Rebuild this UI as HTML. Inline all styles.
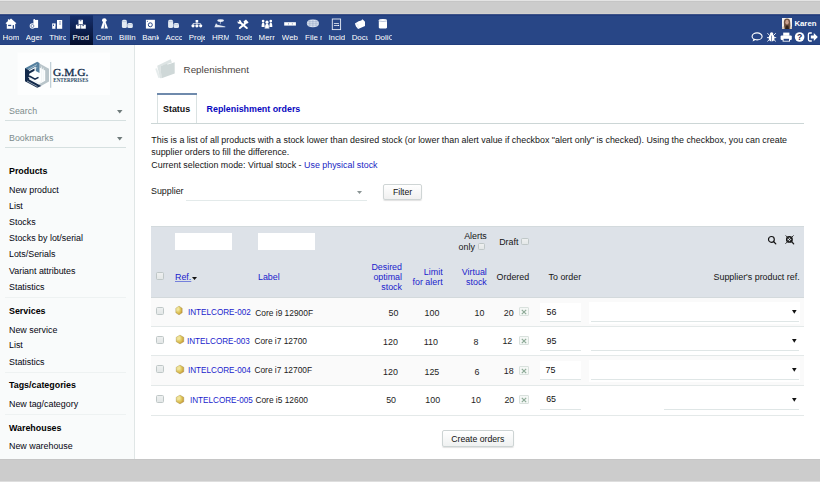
<!DOCTYPE html>
<html><head><meta charset="utf-8"><title>Replenishment</title>
<style>
html,body{margin:0;padding:0;}
body{width:820px;height:482px;overflow:hidden;position:relative;background:#fff;font-family:"Liberation Sans", sans-serif;}
.t{position:absolute;white-space:nowrap;line-height:1;font-family:"Liberation Sans", sans-serif;}
svg{overflow:visible;}
</style></head><body>
<div style="position:absolute;left:0px;top:0px;width:820px;height:14px;background:#cccccc;"></div>
<div style="position:absolute;left:0px;top:0px;width:820px;height:1px;background:#e4e4e4;"></div>
<div style="position:absolute;left:0px;top:1px;width:820px;height:1px;background:#c6c6c6;"></div>
<div style="position:absolute;left:0px;top:13px;width:820px;height:1px;background:#d3d1ce;"></div>
<div style="position:absolute;left:0px;top:14px;width:820px;height:31px;background:#284686;"></div>
<div style="position:absolute;left:0px;top:14px;width:820px;height:1px;background:#3d5287;"></div>
<div style="position:absolute;left:0px;top:15px;width:820px;height:1px;background:#213c7d;"></div>
<div style="position:absolute;left:0px;top:44px;width:820px;height:1px;background:#223e7e;"></div>
<div style="position:absolute;left:69.8px;top:14.5px;width:23.2px;height:30.5px;background:linear-gradient(#16306e,#040e2c);"></div>
<div class="t" style="left:2.60px;top:34px;font-size:7.9px;color:#fff;width:16.60px;overflow:hidden;">Hom</div>
<div class="t" style="left:25.87px;top:34px;font-size:7.9px;color:#fff;width:16.60px;overflow:hidden;">Ager</div>
<div class="t" style="left:49.14px;top:34px;font-size:7.9px;color:#fff;width:16.60px;overflow:hidden;">Thirc</div>
<div class="t" style="left:72.41px;top:34px;font-size:7.9px;color:#fff;width:16.60px;overflow:hidden;">Prod</div>
<div class="t" style="left:95.68px;top:34px;font-size:7.9px;color:#fff;width:16.60px;overflow:hidden;">Com</div>
<div class="t" style="left:118.95px;top:34px;font-size:7.9px;color:#fff;width:16.60px;overflow:hidden;">Billin</div>
<div class="t" style="left:142.22px;top:34px;font-size:7.9px;color:#fff;width:16.60px;overflow:hidden;">Bank</div>
<div class="t" style="left:165.49px;top:34px;font-size:7.9px;color:#fff;width:16.60px;overflow:hidden;">Accc</div>
<div class="t" style="left:188.76px;top:34px;font-size:7.9px;color:#fff;width:16.60px;overflow:hidden;">Proje</div>
<div class="t" style="left:212.03px;top:34px;font-size:7.9px;color:#fff;width:16.60px;overflow:hidden;">HRM</div>
<div class="t" style="left:235.30px;top:34px;font-size:7.9px;color:#fff;width:16.60px;overflow:hidden;">Tools</div>
<div class="t" style="left:258.57px;top:34px;font-size:7.9px;color:#fff;width:16.60px;overflow:hidden;">Merr</div>
<div class="t" style="left:281.84px;top:34px;font-size:7.9px;color:#fff;width:16.60px;overflow:hidden;">Web</div>
<div class="t" style="left:305.11px;top:34px;font-size:7.9px;color:#fff;width:16.60px;overflow:hidden;">File manager</div>
<div class="t" style="left:328.38px;top:34px;font-size:7.9px;color:#fff;width:16.60px;overflow:hidden;">Incid</div>
<div class="t" style="left:351.65px;top:34px;font-size:7.9px;color:#fff;width:16.60px;overflow:hidden;">Docu</div>
<div class="t" style="left:374.92px;top:34px;font-size:7.9px;color:#fff;width:16.60px;overflow:hidden;">DoliC</div>
<svg style="position:absolute;left:0;top:0" width="400" height="45" viewBox="0 0 400 45"><path d="M11.0 18.6 L16.4 23.3 L15.4 23.9 L15.2 23.7 L15.2 28.8 L6.8 28.8 L6.8 23.7 L6.6 23.9 L5.5 23.3Z" fill="#fff"/><rect x="7.9" y="19.3" width="1.4" height="2.6" fill="#fff"/><rect x="8.1" y="24.8" width="3.1" height="1.3" fill="#284686"/><rect x="12.7" y="25.1" width="1.3" height="3.7" fill="#284686"/><rect x="33.4" y="19.9" width="4.7" height="8" fill="#fff"/><rect x="33.6" y="19.0" width="1.3" height="1.5" fill="#fff"/><circle cx="32.4" cy="26.0" r="2.7" fill="#fff"/><circle cx="32.4" cy="26.0" r="1.5" fill="none" stroke="#284686" stroke-width="0.6"/><rect x="52.2" y="23.4" width="3.4" height="5.4" fill="#fff"/><rect x="57.0" y="20.0" width="5.2" height="8.8" fill="#fff"/><rect x="53.0" y="24.6" width="1.0" height="1.3" fill="#284686"/><rect x="59.5" y="21.3" width="1.0" height="1.2" fill="#284686"/><rect x="59.5" y="23.4" width="1.0" height="1.2" fill="#284686"/><rect x="55.6" y="26.5" width="1.4" height="2.3" fill="#284686"/><rect x="78.5" y="19.8" width="4.4" height="4.4" fill="#fff"/><rect x="75.9" y="24.7" width="4.6" height="4.0" fill="#fff"/><rect x="81.1" y="24.7" width="4.7" height="4.0" fill="#fff"/><rect x="79.8" y="20.4" width="1.6" height="0.8" fill="#1b3270"/><rect x="77.2" y="25.3" width="1.6" height="0.8" fill="#102560"/><rect x="82.4" y="25.3" width="1.6" height="0.8" fill="#102560"/><ellipse cx="104.3" cy="20.2" rx="2.3" ry="2.0" fill="#fff"/><path d="M103.0 22.0 L105.6 22.0 L108.0 28.6 L100.8 28.6Z" fill="#fff"/><path d="M104.3 23.0 L104.9 28.6 L103.7 28.6Z" fill="#284686"/><rect x="121.9" y="19.8" width="5.0" height="8.2" rx="1.6" fill="#e3eaf3"/><rect x="127.30000000000001" y="23.0" width="5.5" height="5.0" rx="1.6" fill="#e3eaf3"/><path d="M121.9 21.6 L126.9 21.6 M127.30000000000001 24.7 L132.8 24.7" stroke="#9fb0cc" stroke-width="0.5"/><rect x="168.1" y="19.8" width="5.0" height="8.2" rx="1.6" fill="#e3eaf3"/><rect x="173.5" y="23.0" width="5.5" height="5.0" rx="1.6" fill="#e3eaf3"/><path d="M168.1 21.6 L173.1 21.6 M173.5 24.7 L179.0 24.7" stroke="#9fb0cc" stroke-width="0.5"/><rect x="145.9" y="19.8" width="9.0" height="8.8" fill="#fff"/><circle cx="150.3" cy="24.8" r="2.0" fill="none" stroke="#284686" stroke-width="1.0"/><circle cx="147.4" cy="21.2" r="0.5" fill="#284686"/><rect x="195.6" y="20.0" width="2.6" height="2.5" fill="#fff"/><path d="M196.9 22.4 L196.9 24 M193 24.5 L193 23.6 L200.6 23.6 L200.6 24.5" stroke="#fff" stroke-width="0.7" fill="none"/><circle cx="193.0" cy="25.8" r="1.6" fill="#fff"/><circle cx="196.9" cy="25.8" r="1.6" fill="#fff"/><circle cx="200.7" cy="25.8" r="1.6" fill="#fff"/><ellipse cx="220.6" cy="20.6" rx="3.3" ry="1.3" fill="#eef2f8"/><path d="M220.6 21.5 L220.2 24.2" stroke="#eef2f8" stroke-width="0.6"/><path d="M214.4 27.2 L216.0 23.2 L217.5 24.8 L225.3 26.4 L225.3 27.2Z" fill="#dfe6f1"/><path d="M240.2 22.6 L246.8 28.0" stroke="#fff" stroke-width="2.0" stroke-linecap="round"/><path d="M246.4 22.4 L239.8 28.0" stroke="#fff" stroke-width="2.0" stroke-linecap="round"/><circle cx="239.4" cy="21.9" r="1.9" fill="#fff"/><path d="M237.0 20.6 L238.6 22.0 L239.4 21.2 L238.2 19.4Z" fill="#284686"/><path d="M243.4 21.4 L246.0 19.6 L248.6 22.4 L247.4 23.6 L245.6 22.4 L244.4 23.2Z" fill="#fff"/><circle cx="263.1" cy="21.0" r="1.35" fill="#fff"/><circle cx="270.8" cy="21.0" r="1.35" fill="#fff"/><path d="M261.6 27.0 Q261.5 22.8 263.1 22.3 Q264.8 22.8 264.8 27.0Z" fill="#fff"/><path d="M269.2 27.0 Q269.2 22.8 270.8 22.3 Q272.4 22.8 272.3 27.0Z" fill="#fff"/><circle cx="267.0" cy="22.2" r="1.6" fill="#fff"/><path d="M264.6 28.6 Q264.8 24.0 267.0 23.6 Q269.2 24.0 269.4 28.6Z" fill="#fff"/><path d="M264.9 22 L264.9 28 M269.1 22 L269.1 28" stroke="#284686" stroke-width="0.35"/><rect x="284.2" y="22.2" width="11.7" height="3.4" fill="#fff"/><rect x="288.1" y="23.4" width="0.6" height="1.0" fill="#284686"/><rect x="291.9" y="23.4" width="0.6" height="1.0" fill="#284686"/><path d="M306.8 23.3 Q307 19.2 312.9 19.4 Q318.9 19.2 319.0 23.3 Q318.9 27.4 312.9 27.3 Q307 27.4 306.8 23.3Z" fill="#dce4f0"/><path d="M306.9 23.3 L319 23.3 M307.5 21.6 L318.3 21.6 M307.5 25.1 L318.3 25.1 M312.9 19.4 L312.9 27.3 M309.8 19.8 L309.8 26.9 M316 19.8 L316 26.9" stroke="#8a9cc0" stroke-width="0.45"/><rect x="332.3" y="19.0" width="8.3" height="10.6" fill="none" stroke="#e8edf6" stroke-width="0.9"/><rect x="333.9" y="23.2" width="5.0" height="0.8" fill="#e8edf6"/><rect x="333.9" y="25.0" width="5.0" height="0.8" fill="#e8edf6"/><circle cx="338.6" cy="25.4" r="0.6" fill="#fff"/><path d="M354.9 23.4 L358.6 21.3 L361.3 20.6 L362.3 19.3 L363.6 20.2 L365.0 21.7 L365.0 26.0 L358.2 28.9 L356.0 26.4Z" fill="#fff"/><path d="M355.2 23.5 L358.0 24.5 L358.2 28.9" stroke="#c8d3e8" stroke-width="0.5" fill="none"/><path d="M378.8 20.2 Q378.8 18.9 382.9 18.9 Q387 18.9 387 20.2 L387 27.4 Q387 28.6 382.9 28.6 Q378.8 28.6 378.8 27.4Z" fill="#fff"/><path d="M378.9 21.0 Q382.9 22.0 386.9 21.0" stroke="#8a9cc0" stroke-width="0.6" fill="none"/></svg>
<svg style="position:absolute;left:782px;top:18px" width="10" height="11" viewBox="0 0 10 11"><rect width="10" height="11" fill="#f4f1ee"/><path d="M2.2 11 L1.8 4 Q2 0.6 5 0.6 Q8 0.6 8.2 4 L8.6 11Z" fill="#6e5141"/><ellipse cx="5" cy="4.2" rx="1.7" ry="2.4" fill="#c9a08e"/><path d="M3.2 11 L3.8 7.5 L6.4 7.5 L7 11Z" fill="#2f221c"/><path d="M0 9 L2 8 L2.4 11 L0 11Z M10 9 L8 8 L7.8 11 L10 11Z" fill="#d8cbbd"/></svg>
<div class="t" style="left:794.40px;top:20.00px;font-size:7.8px;font-weight:bold;color:#fff;">Karen</div>
<svg style="position:absolute;left:751px;top:32px" width="68" height="10" viewBox="0 0 68 10"><ellipse cx="6.1" cy="4.4" rx="5.0" ry="3.5" fill="none" stroke="#fff" stroke-width="1.1"/><path d="M2.6 6.6 L1.6 9.6 L5.4 7.6Z" fill="#fff"/><circle cx="20.6" cy="1.9" r="1.7" fill="#fff"/><ellipse cx="20.6" cy="5.9" rx="2.9" ry="3.4" fill="#fff"/><path d="M16.4 1.2 L18.6 3.4 M24.8 1.2 L22.6 3.4 M16.0 5.6 L25.2 5.6 M16.4 9.4 L18.4 7.6 M24.8 9.4 L22.8 7.6" stroke="#fff" stroke-width="0.9"/><rect x="20.3" y="3.6" width="0.6" height="5.6" fill="#284686"/><rect x="32.2" y="0.6" width="6.2" height="3.2" fill="#fff"/><rect x="29.6" y="3.4" width="11.2" height="4.6" rx="1.2" fill="#fff"/><rect x="31.6" y="6.0" width="7.4" height="3.6" fill="#fff"/><rect x="32.6" y="6.8" width="5.4" height="2.0" fill="#284686"/><circle cx="48.6" cy="5.0" r="4.8" fill="#fff"/><text x="48.7" y="8.4" font-family="Liberation Sans" font-weight="bold" font-size="8.6" fill="#16244e" text-anchor="middle">?</text><path d="M60.8 1.0 L58.6 1.0 Q57.4 1.0 57.4 2.4 L57.4 7.6 Q57.4 9.0 58.6 9.0 L60.8 9.0" fill="none" stroke="#fff" stroke-width="1.3"/><path d="M59.8 3.6 L62.8 3.6 L62.8 1.0 L66.8 5.0 L62.8 9.0 L62.8 6.4 L59.8 6.4Z" fill="#fff"/></svg>
<div style="position:absolute;left:0px;top:45px;width:134px;height:414px;background:#f9fbfb;"></div>
<div style="position:absolute;left:134px;top:45px;width:1px;height:414px;background:#e0e6e6;"></div>
<svg style="position:absolute;left:0;top:45px" width="134" height="60" viewBox="0 45 134 60"><rect x="17.5" y="52.5" width="92.5" height="42.5" fill="#fdfefe"/><path d="M39.5 63.6 L49 68.8 L49 81.6 L41 86 L38.5 84.6 L45.2 80.8 L45.2 70.6 L39.5 67.4Z" fill="#b9c5ca"/><path d="M41.5 66.5 L41.5 82.5 M43.3 67.8 L43.3 81.5" stroke="#eef2f3" stroke-width="0.7"/><path d="M25 68.2 L37.2 61.8 L39.5 63.1 L39.5 73 L35.8 71 L35.8 66.5 L29.2 70.2 L25 72.5Z" fill="#55809f"/><path d="M27.5 69.8 L37 64.6 M29 72 L37.3 67.4" stroke="#d5e2ea" stroke-width="0.6"/><path d="M25 68.2 L29.2 70.4 L29.2 79.4 L41.3 86 L37.2 87.8 L25 81.2Z" fill="#12294a"/><path d="M27.4 72.2 L34.5 68.4 L34.5 70.8 L29.2 73.8Z" fill="#12294a"/><path d="M27 81 L37.5 86.6 M28 77.2 L38.8 83.2 L41 82" stroke="#dfe7ec" stroke-width="0.6" fill="none"/><path d="M29.2 76 L35 79.2 L38.5 77.4" stroke="#12294a" stroke-width="1.6" fill="none"/><rect x="50.3" y="62" width="0.9" height="25.8" fill="#a9bcc6"/><text x="53" y="75.6" font-family="Liberation Serif" font-size="10.8" fill="#15304f" stroke="#15304f" stroke-width="0.35" textLength="35.4" lengthAdjust="spacingAndGlyphs">G.M.G.</text><text x="53.3" y="81.8" font-family="Liberation Serif" font-weight="bold" font-size="5.4" fill="#2b4a66" textLength="35" lengthAdjust="spacingAndGlyphs">ENTERPRISES</text></svg>
<div class="t" style="left:9.00px;top:107.00px;font-size:8.9px;font-weight:normal;color:#7d8b8b;">Search</div>
<div style="position:absolute;left:5.3px;top:120px;width:121px;height:1px;background:#d6e0e0;"></div>
<svg style="position:absolute;left:116.8px;top:110px" width="6" height="4"><path d="M0 0 L5.5 0 L2.75 3.5Z" fill="#6f7b7b"/></svg>
<div class="t" style="left:9.00px;top:134.00px;font-size:8.9px;font-weight:normal;color:#7d8b8b;">Bookmarks</div>
<div style="position:absolute;left:5.3px;top:147px;width:121px;height:1px;background:#d6e0e0;"></div>
<svg style="position:absolute;left:116.8px;top:137px" width="6" height="4"><path d="M0 0 L5.5 0 L2.75 3.5Z" fill="#6f7b7b"/></svg>
<div class="t" style="left:9.00px;top:167.00px;font-size:8.9px;font-weight:bold;color:#000;">Products</div>
<div class="t" style="left:9.00px;top:186.00px;font-size:8.9px;font-weight:normal;color:#050510;">New product</div>
<div class="t" style="left:9.00px;top:202.00px;font-size:8.9px;font-weight:normal;color:#050510;">List</div>
<div class="t" style="left:9.00px;top:218.00px;font-size:8.9px;font-weight:normal;color:#050510;">Stocks</div>
<div class="t" style="left:9.00px;top:234.00px;font-size:8.9px;font-weight:normal;color:#050510;">Stocks by lot/serial</div>
<div class="t" style="left:9.00px;top:250.00px;font-size:8.9px;font-weight:normal;color:#050510;">Lots/Serials</div>
<div class="t" style="left:9.00px;top:267.00px;font-size:8.9px;font-weight:normal;color:#050510;">Variant attributes</div>
<div class="t" style="left:9.00px;top:283.00px;font-size:8.9px;font-weight:normal;color:#050510;">Statistics</div>
<div style="position:absolute;left:5.3px;top:297px;width:121px;height:1px;background:#eef2f2;"></div>
<div class="t" style="left:9.00px;top:307.00px;font-size:8.9px;font-weight:bold;color:#000;">Services</div>
<div class="t" style="left:9.00px;top:326.00px;font-size:8.9px;font-weight:normal;color:#050510;">New service</div>
<div class="t" style="left:9.00px;top:341.00px;font-size:8.9px;font-weight:normal;color:#050510;">List</div>
<div class="t" style="left:9.00px;top:358.00px;font-size:8.9px;font-weight:normal;color:#050510;">Statistics</div>
<div style="position:absolute;left:5.3px;top:372px;width:121px;height:1px;background:#eef2f2;"></div>
<div class="t" style="left:9.00px;top:381.00px;font-size:8.9px;font-weight:bold;color:#000;">Tags/categories</div>
<div class="t" style="left:9.00px;top:400.00px;font-size:8.9px;font-weight:normal;color:#050510;">New tag/category</div>
<div style="position:absolute;left:5.3px;top:414px;width:121px;height:1px;background:#eef2f2;"></div>
<div class="t" style="left:9.00px;top:424.00px;font-size:8.9px;font-weight:bold;color:#000;">Warehouses</div>
<div class="t" style="left:9.00px;top:442.00px;font-size:8.9px;font-weight:normal;color:#050510;">New warehouse</div>
<div style="position:absolute;left:0px;top:459px;width:820px;height:23px;background:#cccccc;"></div>
<div style="position:absolute;left:0px;top:459px;width:820px;height:1px;background:#c6c6c6;"></div>
<div style="position:absolute;left:0px;top:481px;width:820px;height:1px;background:#dedede;"></div>
<svg style="position:absolute;left:0;top:0" width="200" height="90" viewBox="0 0 200 90"><path d="M155.2 68.8 L157.0 68.2 L160.2 77.6 L158.4 78.0Z" fill="#e6ecec"/><path d="M157.2 65.8 L170.6 59.3 L172.0 62.4 L160.4 66.2 L161.6 78.0 L160.0 78.2Z" fill="#dde4e4"/><path d="M160.4 66.2 L166.6 63.8 L167.8 64.6 L174.7 62.2 L174.7 73.5 L161.6 78.2Z" fill="#cfd8d8"/></svg>
<div class="t" style="left:183.60px;top:65.00px;font-size:9.8px;font-weight:normal;color:#4a4541;">Replenishment</div>
<div style="position:absolute;left:151px;top:123px;width:653px;height:1px;background:#ccd6d6;"></div>
<div style="position:absolute;left:157.4px;top:93px;width:39.6px;height:30px;background:#fff;border-left:1px solid #dae2e2;border-right:1px solid #dae2e2;box-sizing:border-box;"></div>
<div style="position:absolute;left:157.4px;top:93px;width:39.6px;height:2px;background:#6f8aac;"></div>
<div class="t" style="left:163.00px;top:105.00px;font-size:8.9px;font-weight:bold;color:#111;">Status</div>
<div class="t" style="left:206.60px;top:105.00px;font-size:8.9px;font-weight:bold;color:#0808c0;">Replenishment orders</div>
<div class="t" style="left:151.30px;top:136.00px;font-size:8.9px;font-weight:normal;color:#151515;">This is a list of all products with a stock lower than desired stock (or lower than alert value if checkbox &quot;alert only&quot; is checked). Using the checkbox, you can create</div>
<div class="t" style="left:151.30px;top:148.00px;font-size:8.9px;font-weight:normal;color:#151515;">supplier orders to fill the difference.</div>
<div class="t" style="left:151.3px;top:161px;font-size:8.9px;color:#151515">Current selection mode: Virtual stock - <span style="color:#1a26c4">Use physical stock</span></div>
<div class="t" style="left:151.00px;top:187.00px;font-size:8.9px;font-weight:normal;color:#151515;">Supplier</div>
<div style="position:absolute;left:186px;top:200px;width:181px;height:1px;background:#e3eaea;"></div>
<svg style="position:absolute;left:357px;top:191px" width="6" height="4"><path d="M0 0 L5 0 L2.5 3Z" fill="#8a9494"/></svg>
<div style="position:absolute;left:383px;top:184px;width:39px;height:16px;background:linear-gradient(#fff,#f0f0f0);border:1px solid #cfd5d5;border-radius:2px;box-shadow:0 1px 1px rgba(0,0,0,0.12);box-sizing:border-box;"></div>
<div class="t" style="left:202.60px;width:400px;text-align:center;top:188.00px;font-size:8.7px;font-weight:normal;color:#111;">Filter</div>
<div style="position:absolute;left:151px;top:226px;width:653px;height:71px;background:#dde2e8;"></div>
<div style="position:absolute;left:151px;top:226px;width:653px;height:1px;background:#d3dadd;"></div>
<div style="position:absolute;left:151px;top:297px;width:653px;height:1px;background:#d3d9dc;"></div>
<div style="position:absolute;left:175px;top:233px;width:57px;height:17px;background:#fff;"></div>
<div style="position:absolute;left:258px;top:233px;width:57px;height:17px;background:#fff;"></div>
<div style="position:absolute;left:156.2px;top:272.3px;width:7.5px;height:7.5px;background:linear-gradient(#eef0f0,#e3e7e7);border:1px solid #bfc7c7;border-radius:1.5px;box-sizing:border-box;"></div>
<div class="t" style="left:175.00px;top:273.00px;font-size:8.9px;font-weight:normal;color:#1a1ccc;text-decoration:underline;text-decoration-color:#7480dc;">Ref.</div>
<svg style="position:absolute;left:191.8px;top:276.8px" width="6" height="4"><path d="M0 0 L5.0 0 L2.5 3Z" fill="#111"/></svg>
<div class="t" style="left:258.00px;top:273.00px;font-size:8.9px;font-weight:normal;color:#1a1ccc;">Label</div>
<div class="t" style="right:418.00px;top:263.00px;font-size:8.9px;font-weight:normal;color:#1a1ccc;">Desired</div>
<div class="t" style="right:418.00px;top:273.00px;font-size:8.9px;font-weight:normal;color:#1a1ccc;">optimal</div>
<div class="t" style="right:418.00px;top:283.00px;font-size:8.9px;font-weight:normal;color:#1a1ccc;">stock</div>
<div class="t" style="right:377.40px;top:268.00px;font-size:8.9px;font-weight:normal;color:#1a1ccc;">Limit</div>
<div class="t" style="right:377.40px;top:278.00px;font-size:8.9px;font-weight:normal;color:#1a1ccc;">for alert</div>
<div class="t" style="right:333.20px;top:268.00px;font-size:8.9px;font-weight:normal;color:#1a1ccc;">Virtual</div>
<div class="t" style="right:333.20px;top:278.00px;font-size:8.9px;font-weight:normal;color:#1a1ccc;">stock</div>
<div class="t" style="right:333.20px;top:232.00px;font-size:8.9px;font-weight:normal;color:#151515;">Alerts</div>
<div class="t" style="left:458.60px;top:243.00px;font-size:8.9px;font-weight:normal;color:#151515;">only</div>
<div style="position:absolute;left:478.2px;top:242.6px;width:7.3px;height:7.3px;background:linear-gradient(#eef0f0,#e3e7e7);border:1px solid #bfc7c7;border-radius:1.5px;box-sizing:border-box;"></div>
<div class="t" style="left:499.20px;top:238.00px;font-size:8.9px;font-weight:normal;color:#151515;">Draft</div>
<div style="position:absolute;left:521.3px;top:237.6px;width:7.3px;height:7.3px;background:linear-gradient(#eef0f0,#e3e7e7);border:1px solid #bfc7c7;border-radius:1.5px;box-sizing:border-box;"></div>
<div class="t" style="left:496.60px;top:273.00px;font-size:8.9px;font-weight:normal;color:#151515;">Ordered</div>
<div class="t" style="left:548.60px;top:273.00px;font-size:8.9px;font-weight:normal;color:#151515;">To order</div>
<div class="t" style="right:20.40px;top:273.00px;font-size:8.9px;font-weight:normal;color:#151515;">Supplier&#x27;s product ref.</div>
<svg style="position:absolute;left:767px;top:235px" width="30" height="11" viewBox="0 0 30 11"><circle cx="4.4" cy="4.4" r="2.9" fill="none" stroke="#111" stroke-width="1.15"/><path d="M6.5 6.5 L8.8 8.9" stroke="#111" stroke-width="1.25" stroke-linecap="round"/><circle cx="22.4" cy="4.4" r="2.7" fill="none" stroke="#111" stroke-width="1.5"/><path d="M24.5 6.5 L26.7 8.9" stroke="#111" stroke-width="1.2" stroke-linecap="round"/><path d="M18.6 0.4 L26.6 8.6 M26.6 0.4 L18.4 8.8" stroke="#222" stroke-width="0.9"/></svg>
<div style="position:absolute;left:151px;top:297.5px;width:653px;height:29.0px;background:#fafafa;"></div>
<div style="position:absolute;left:151px;top:325.5px;width:653px;height:1px;background:#e4e9e9;"></div>
<div style="position:absolute;left:156.0px;top:307.2px;width:7.5px;height:7.5px;background:linear-gradient(#eef0f0,#e3e7e7);border:1px solid #bfc7c7;border-radius:1.5px;box-sizing:border-box;"></div>
<svg style="position:absolute;left:174.10px;top:305.10px" width="10" height="11" viewBox="-5 -5.5 10 11"><defs><radialGradient id="g310" cx="0.38" cy="0.4" r="0.7"><stop offset="0" stop-color="#f4ea9c"/><stop offset="0.55" stop-color="#dcc256"/><stop offset="1" stop-color="#c08a2a"/></radialGradient></defs><g transform="scale(0.85,1)"><path d="M0 -4.4 L3.8 -2.2 L3.8 2.2 L0 4.4 L-3.8 2.2 L-3.8 -2.2Z" fill="url(#g310)" stroke="#a89a6a" stroke-width="0.4"/><path d="M-3.6 -2 L0 -4.2 L0.6 -1 L-2.8 1.2Z" fill="#f2e7a8" opacity="0.6"/></g></svg>
<div class="t" style="left:188.00px;top:308px;font-size:8.9px;font-weight:normal;color:#1a1ccc;transform:scaleX(0.915);transform-origin:0 0;">INTELCORE-002</div>
<div class="t" style="left:255.30px;top:309.00px;font-size:8.4px;font-weight:normal;color:#222;">Core i9 12900F</div>
<div class="t" style="left:193.40px;width:400px;text-align:center;top:309.00px;font-size:8.9px;font-weight:normal;color:#1e1e1e;">50</div>
<div class="t" style="left:232.00px;width:400px;text-align:center;top:309.00px;font-size:8.9px;font-weight:normal;color:#1e1e1e;">100</div>
<div class="t" style="left:279.50px;width:400px;text-align:center;top:309.00px;font-size:8.9px;font-weight:normal;color:#1e1e1e;">10</div>
<div class="t" style="right:306.40px;top:309.00px;font-size:8.9px;font-weight:normal;color:#1e1e1e;">20</div>
<div style="position:absolute;left:519.2px;top:306.50px;width:10.3px;height:9.8px;box-sizing:border-box;border:1px solid #d9e1dd;background:#f5f8f6;border-radius:1px;"></div>
<svg style="position:absolute;left:521.4px;top:308.70px" width="6" height="6"><path d="M0.8 0.8 L5.2 5.2 M5.2 0.8 L0.8 5.2" stroke="#8eab98" stroke-width="1.2"/></svg>
<div style="position:absolute;left:540px;top:303.3px;width:41px;height:18px;background:#fff;"></div>
<div style="position:absolute;left:540px;top:321.3px;width:41px;height:1px;background:#dfe6e6;"></div>
<div class="t" style="left:546.60px;top:308.00px;font-size:8.9px;font-weight:normal;color:#111;">56</div>
<div style="position:absolute;left:588.5px;top:302.3px;width:211.5px;height:22px;background:#fff;"></div>
<div style="position:absolute;left:591.4px;top:321.3px;width:207.60000000000002px;height:1px;background:#dfe6e6;"></div>
<svg style="position:absolute;left:791.6px;top:309.90px" width="5" height="4"><path d="M0 0 L4.6 0 L2.3 3.8Z" fill="#111"/></svg>
<div style="position:absolute;left:151px;top:326.5px;width:653px;height:29.19999999999999px;background:#ffffff;"></div>
<div style="position:absolute;left:151px;top:354.7px;width:653px;height:1px;background:#e4e9e9;"></div>
<div style="position:absolute;left:156.0px;top:336.0px;width:7.5px;height:7.5px;background:linear-gradient(#eef0f0,#e3e7e7);border:1px solid #bfc7c7;border-radius:1.5px;box-sizing:border-box;"></div>
<svg style="position:absolute;left:174.70px;top:334.10px" width="10" height="11" viewBox="-5 -5.5 10 11"><defs><radialGradient id="g339" cx="0.38" cy="0.4" r="0.7"><stop offset="0" stop-color="#f4ea9c"/><stop offset="0.55" stop-color="#dcc256"/><stop offset="1" stop-color="#c08a2a"/></radialGradient></defs><g transform="scale(1.0,1)"><path d="M0 -4.4 L3.8 -2.2 L3.8 2.2 L0 4.4 L-3.8 2.2 L-3.8 -2.2Z" fill="url(#g339)" stroke="#a89a6a" stroke-width="0.4"/><path d="M-3.6 -2 L0 -4.2 L0.6 -1 L-2.8 1.2Z" fill="#f2e7a8" opacity="0.6"/></g></svg>
<div class="t" style="left:187.30px;top:337px;font-size:8.9px;font-weight:normal;color:#1a1ccc;transform:scaleX(0.915);transform-origin:0 0;">INTELCORE-003</div>
<div class="t" style="left:254.40px;top:337.00px;font-size:8.4px;font-weight:normal;color:#222;">Core i7 12700</div>
<div class="t" style="left:190.50px;width:400px;text-align:center;top:338.00px;font-size:8.9px;font-weight:normal;color:#1e1e1e;">120</div>
<div class="t" style="left:230.90px;width:400px;text-align:center;top:338.00px;font-size:8.9px;font-weight:normal;color:#1e1e1e;">110</div>
<div class="t" style="left:275.90px;width:400px;text-align:center;top:338.00px;font-size:8.9px;font-weight:normal;color:#1e1e1e;">8</div>
<div class="t" style="right:307.70px;top:337.00px;font-size:8.9px;font-weight:normal;color:#1e1e1e;">12</div>
<div style="position:absolute;left:519.2px;top:335.60px;width:10.3px;height:9.8px;box-sizing:border-box;border:1px solid #d9e1dd;background:#f5f8f6;border-radius:1px;"></div>
<svg style="position:absolute;left:521.4px;top:337.80px" width="6" height="6"><path d="M0.8 0.8 L5.2 5.2 M5.2 0.8 L0.8 5.2" stroke="#8eab98" stroke-width="1.2"/></svg>
<div style="position:absolute;left:540px;top:332.3px;width:41px;height:18px;background:#fff;"></div>
<div style="position:absolute;left:540px;top:350.3px;width:41px;height:1px;background:#dfe6e6;"></div>
<div class="t" style="left:546.60px;top:337.00px;font-size:8.9px;font-weight:normal;color:#111;">95</div>
<div style="position:absolute;left:591.4px;top:350.3px;width:207.60000000000002px;height:1px;background:#dfe6e6;"></div>
<svg style="position:absolute;left:791.6px;top:338.90px" width="5" height="4"><path d="M0 0 L4.6 0 L2.3 3.8Z" fill="#111"/></svg>
<div style="position:absolute;left:151px;top:355.7px;width:653px;height:30.400000000000034px;background:#fafafa;"></div>
<div style="position:absolute;left:151px;top:385.1px;width:653px;height:1px;background:#e4e9e9;"></div>
<div style="position:absolute;left:156.0px;top:365.4px;width:7.5px;height:7.5px;background:linear-gradient(#eef0f0,#e3e7e7);border:1px solid #bfc7c7;border-radius:1.5px;box-sizing:border-box;"></div>
<svg style="position:absolute;left:174.70px;top:363.70px" width="10" height="11" viewBox="-5 -5.5 10 11"><defs><radialGradient id="g369" cx="0.38" cy="0.4" r="0.7"><stop offset="0" stop-color="#f4ea9c"/><stop offset="0.55" stop-color="#dcc256"/><stop offset="1" stop-color="#c08a2a"/></radialGradient></defs><g transform="scale(1.0,1)"><path d="M0 -4.4 L3.8 -2.2 L3.8 2.2 L0 4.4 L-3.8 2.2 L-3.8 -2.2Z" fill="url(#g369)" stroke="#a89a6a" stroke-width="0.4"/><path d="M-3.6 -2 L0 -4.2 L0.6 -1 L-2.8 1.2Z" fill="#f2e7a8" opacity="0.6"/></g></svg>
<div class="t" style="left:187.60px;top:366px;font-size:8.9px;font-weight:normal;color:#1a1ccc;transform:scaleX(0.915);transform-origin:0 0;">INTELCORE-004</div>
<div class="t" style="left:254.40px;top:366.00px;font-size:8.4px;font-weight:normal;color:#222;">Core i7 12700F</div>
<div class="t" style="left:190.50px;width:400px;text-align:center;top:368.00px;font-size:8.9px;font-weight:normal;color:#1e1e1e;">120</div>
<div class="t" style="left:231.90px;width:400px;text-align:center;top:368.00px;font-size:8.9px;font-weight:normal;color:#1e1e1e;">125</div>
<div class="t" style="left:277.00px;width:400px;text-align:center;top:368.00px;font-size:8.9px;font-weight:normal;color:#1e1e1e;">6</div>
<div class="t" style="right:306.40px;top:367.00px;font-size:8.9px;font-weight:normal;color:#1e1e1e;">18</div>
<div style="position:absolute;left:519.2px;top:365.50px;width:10.3px;height:9.8px;box-sizing:border-box;border:1px solid #d9e1dd;background:#f5f8f6;border-radius:1px;"></div>
<svg style="position:absolute;left:521.4px;top:367.70px" width="6" height="6"><path d="M0.8 0.8 L5.2 5.2 M5.2 0.8 L0.8 5.2" stroke="#8eab98" stroke-width="1.2"/></svg>
<div style="position:absolute;left:540px;top:361.4px;width:41px;height:18px;background:#fff;"></div>
<div style="position:absolute;left:540px;top:379.4px;width:41px;height:1px;background:#dfe6e6;"></div>
<div class="t" style="left:545.50px;top:366.00px;font-size:8.9px;font-weight:normal;color:#111;">75</div>
<div style="position:absolute;left:588.5px;top:360.4px;width:211.5px;height:22px;background:#fff;"></div>
<div style="position:absolute;left:591.4px;top:379.4px;width:207.60000000000002px;height:1px;background:#dfe6e6;"></div>
<svg style="position:absolute;left:791.6px;top:368.00px" width="5" height="4"><path d="M0 0 L4.6 0 L2.3 3.8Z" fill="#111"/></svg>
<div style="position:absolute;left:151px;top:386.1px;width:653px;height:29.399999999999977px;background:#ffffff;"></div>
<div style="position:absolute;left:151px;top:414.5px;width:653px;height:1px;background:#e4e9e9;"></div>
<div style="position:absolute;left:156.0px;top:395.09999999999997px;width:7.5px;height:7.5px;background:linear-gradient(#eef0f0,#e3e7e7);border:1px solid #bfc7c7;border-radius:1.5px;box-sizing:border-box;"></div>
<svg style="position:absolute;left:174.70px;top:393.70px" width="10" height="11" viewBox="-5 -5.5 10 11"><defs><radialGradient id="g399" cx="0.38" cy="0.4" r="0.7"><stop offset="0" stop-color="#f4ea9c"/><stop offset="0.55" stop-color="#dcc256"/><stop offset="1" stop-color="#c08a2a"/></radialGradient></defs><g transform="scale(1.0,1)"><path d="M0 -4.4 L3.8 -2.2 L3.8 2.2 L0 4.4 L-3.8 2.2 L-3.8 -2.2Z" fill="url(#g399)" stroke="#a89a6a" stroke-width="0.4"/><path d="M-3.6 -2 L0 -4.2 L0.6 -1 L-2.8 1.2Z" fill="#f2e7a8" opacity="0.6"/></g></svg>
<div class="t" style="left:189.50px;top:396px;font-size:8.9px;font-weight:normal;color:#1a1ccc;transform:scaleX(0.915);transform-origin:0 0;">INTELCORE-005</div>
<div class="t" style="left:255.40px;top:396.00px;font-size:8.4px;font-weight:normal;color:#222;">Core i5 12600</div>
<div class="t" style="left:191.10px;width:400px;text-align:center;top:396.00px;font-size:8.9px;font-weight:normal;color:#1e1e1e;">50</div>
<div class="t" style="left:232.70px;width:400px;text-align:center;top:396.00px;font-size:8.9px;font-weight:normal;color:#1e1e1e;">100</div>
<div class="t" style="left:275.90px;width:400px;text-align:center;top:396.00px;font-size:8.9px;font-weight:normal;color:#1e1e1e;">10</div>
<div class="t" style="right:305.70px;top:396.00px;font-size:8.9px;font-weight:normal;color:#1e1e1e;">20</div>
<div style="position:absolute;left:519.2px;top:394.60px;width:10.3px;height:9.8px;box-sizing:border-box;border:1px solid #d9e1dd;background:#f5f8f6;border-radius:1px;"></div>
<svg style="position:absolute;left:521.4px;top:396.80px" width="6" height="6"><path d="M0.8 0.8 L5.2 5.2 M5.2 0.8 L0.8 5.2" stroke="#8eab98" stroke-width="1.2"/></svg>
<div style="position:absolute;left:540px;top:391.1px;width:41px;height:18px;background:#fff;"></div>
<div style="position:absolute;left:540px;top:409.1px;width:41px;height:1px;background:#dfe6e6;"></div>
<div class="t" style="left:546.20px;top:395.00px;font-size:8.9px;font-weight:normal;color:#111;">65</div>
<div style="position:absolute;left:663.8px;top:409.1px;width:135.20000000000005px;height:1px;background:#dfe6e6;"></div>
<svg style="position:absolute;left:791.6px;top:397.70px" width="5" height="4"><path d="M0 0 L4.6 0 L2.3 3.8Z" fill="#111"/></svg>
<div style="position:absolute;left:441.6px;top:430.4px;width:72.2px;height:16.2px;background:linear-gradient(#fff,#eff1f1);border:1px solid #cdd4d4;border-radius:2px;box-shadow:0 1px 1px rgba(0,0,0,0.12);box-sizing:border-box;"></div>
<div class="t" style="left:277.80px;width:400px;text-align:center;top:435.00px;font-size:8.7px;font-weight:normal;color:#111;">Create orders</div>
</body></html>
